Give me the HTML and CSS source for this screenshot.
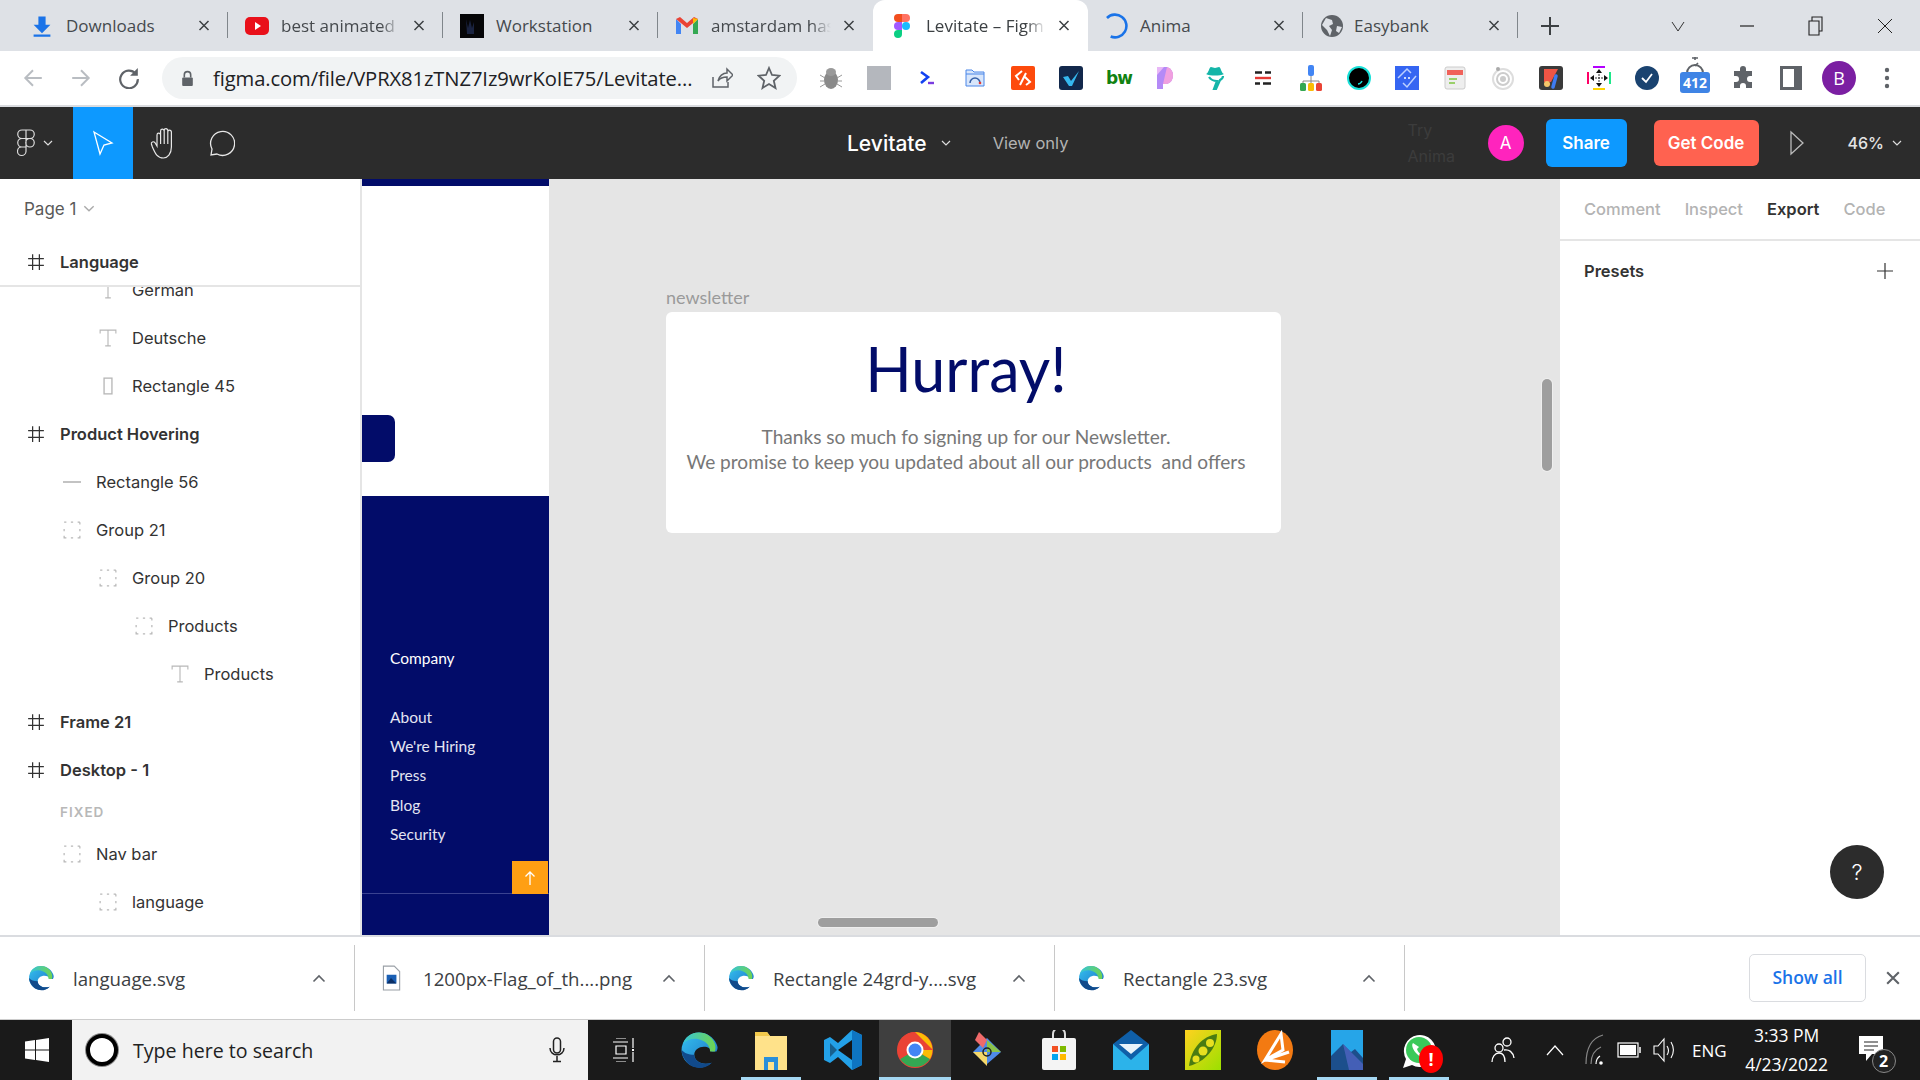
FILE: index.html
```html
<!DOCTYPE html>
<html lang="en">
<head>
  <meta charset="UTF-8" />
  <title>Levitate – Figma</title>
  <link rel="stylesheet" href="styles.css">
</head>
<body>
  <svg class="defs" width="0" height="0">
    <defs>
      <linearGradient id="edgeA" x1="0" y1="0" x2="1" y2="1"><stop offset="0" stop-color="#35c1f1"/><stop offset="1" stop-color="#1b6fc0"/></linearGradient>
      <linearGradient id="edgeB" x1="0" y1="0" x2="1" y2="0"><stop offset="0" stop-color="#36c5d8"/><stop offset="1" stop-color="#6fd44f"/></linearGradient>
      <symbol id="edge" viewBox="0 0 24 24">
        <path d="M12 1a11 11 0 0 0-11 11c0 6 5 11 11 11 3 0 6-1 8-3-6 2-11-1-11-5 0-3 3-5 6-5 3 0 4 1 5 3h3c1-2 1-3 0-5C21 4 17 1 12 1z" fill="url(#edgeA)"/>
        <path d="M12 1C7 1 3 4 2 8c3-3 8-4 12-2 3 1 5 4 5 7h3c2-5-3-12-10-12z" fill="url(#edgeB)"/>
        <path d="M9 15c0 4 5 7 11 5-4 4-9 4-13 2-3-2-6-6-6-10 2 2 4 3 8 3z" fill="#114a8b"/>
      </symbol>
      <symbol id="frameicon" viewBox="0 0 16 16">
        <path d="M5 1v14M11 1v14M1 5h14M1 11h14" fill="none" stroke="#333" stroke-width="1.100"/>
      </symbol>
      <symbol id="groupicon" viewBox="0 0 16 16">
        <path d="M1 1h2M7 1h2M13 1h2M1 7v2M15 7v2M1 13v2h2M7 15h2M13 15h2v-2M1 3v0M15 1v2" fill="none" stroke="#b8b8b8" stroke-width="1.100"/>
      </symbol>
      <symbol id="texticon" viewBox="0 0 16 16">
        <path d="M1 4V1h14v3M8 1v14M5.500 15h5" fill="none" stroke="#b8b8b8" stroke-width="1"/>
      </symbol>
      <symbol id="closex" viewBox="0 0 12 12">
        <path d="M1.500 1.500l9 9M10.500 1.500l-9 9" fill="none" stroke="#3c4043" stroke-width="1.500"/>
      </symbol>
      <symbol id="caret" viewBox="0 0 14 9">
        <path d="M1.500 7.500L7 2l5.500 5.500" fill="none" stroke="#5f6368" stroke-width="1.600"/>
      </symbol>
      <symbol id="chev" viewBox="0 0 10 6">
        <path d="M1 1l4 4 4-4" fill="none" stroke="currentColor" stroke-width="1.200"/>
      </symbol>
    </defs>
  </svg>

  <div class="tabstrip">
    <div class="tab">
      <svg class="tab-icon" viewBox="0 0 20 20"><path d="M7 2h6v7h4l-7 7-7-7h4zM3 17h14v2H3z" fill="#1a73e8"/></svg>
      <span class="tab-title">Downloads</span>
      <svg class="tab-x"><use href="#closex"/></svg>
    </div>
    <div class="tab">
      <svg class="tab-icon" viewBox="0 0 24 24"><rect x="0" y="3" width="24" height="18" rx="5" fill="#e9101a"/><path d="M10 8l6 4-6 4z" fill="#fff"/></svg>
      <span class="tab-title tab-fade">best animated</span>
      <svg class="tab-x"><use href="#closex"/></svg>
    </div>
    <div class="tab">
      <svg class="tab-icon" viewBox="0 0 24 24"><rect width="24" height="24" fill="#060608"/><path d="M6 5l2 9 2-8 2 8 2-6v12H7z" fill="#1a2340"/></svg>
      <span class="tab-title">Workstation</span>
      <svg class="tab-x"><use href="#closex"/></svg>
    </div>
    <div class="tab tab-last-before">
      <svg class="tab-icon" viewBox="0 0 24 24"><path d="M1 5v15h5V10z" fill="#4285f4"/><path d="M23 5v15h-5V10z" fill="#34a853"/><path d="M1 5l4-2 7 6 7-6 4 2-11 9z" fill="#ea4335"/><path d="M18 4l5 1-5 5z" fill="#fbbc04"/></svg>
      <span class="tab-title tab-fade">amstardam has</span>
      <svg class="tab-x"><use href="#closex"/></svg>
    </div>
    <div class="tab tab-active">
      <svg class="tab-icon" viewBox="0 0 16 24"><path d="M4 0h4v8H4a4 4 0 0 1 0-8z" fill="#f24e1e"/><path d="M8 0h4a4 4 0 0 1 0 8H8z" fill="#ff7262"/><path d="M4 8h4v8H4a4 4 0 0 1 0-8z" fill="#a259ff"/><circle cx="12" cy="12" r="4" fill="#1abcfe"/><path d="M4 16h4v4a4 4 0 1 1-4-4z" fill="#0acf83"/></svg>
      <span class="tab-title tab-fade">Levitate – Figm</span>
      <svg class="tab-x"><use href="#closex"/></svg>
    </div>
    <div class="tab">
      <svg class="tab-icon tab-icon-ring" viewBox="0 0 24 24"><path d="M4.600 4.600A10.500 10.500 0 1 1 8 21.700" fill="none" stroke="#1a73e8" stroke-width="2.400"/></svg>
      <span class="tab-title">Anima</span>
      <svg class="tab-x"><use href="#closex"/></svg>
    </div>
    <div class="tab">
      <svg class="tab-icon" viewBox="0 0 24 24"><circle cx="12" cy="12" r="11" fill="#5f6368"/><path d="M6 4l6 2 1 4-4 2 3 4-2 6-3-6-5-5zM17 12l5 1-3 6-3-2z" fill="#dee1e6"/></svg>
      <span class="tab-title tab-title-tight">Easybank</span>
      <svg class="tab-x"><use href="#closex"/></svg>
    </div>
    <div class="newtab">
      <svg width="18" height="18" viewBox="0 0 18 18"><path d="M9 0v18M0 9h18" stroke="#3c4043" stroke-width="2"/></svg>
    </div>
    <div class="winctl">
      <svg class="winbtn" viewBox="0 0 16 16" width="16" height="16"><path d="M2 4l6 9 6-9" fill="none" stroke="#333" stroke-width="1"/></svg>
      <svg class="winbtn" viewBox="0 0 16 16" width="16" height="16"><path d="M1 8h14" stroke="#222" stroke-width="1.200"/></svg>
      <svg class="winbtn" viewBox="0 0 16 20" width="16" height="20"><path d="M1 5h10v14H1zM4 5V1h10v14h-3" fill="none" stroke="#222" stroke-width="1.100"/></svg>
      <svg class="winbtn" viewBox="0 0 16 16" width="16" height="16"><path d="M1 1l14 14M15 1L1 15" stroke="#222" stroke-width="1"/></svg>
    </div>
  </div>

  <div class="toolbar">
    <svg class="nav-btn" viewBox="0 0 20 20"><path d="M18 10H3M10 3l-7 7 7 7" fill="none" stroke="#b9bdc2" stroke-width="1.800"/></svg>
    <svg class="nav-btn" viewBox="0 0 20 20"><path d="M2 10h15M10 3l7 7-7 7" fill="none" stroke="#b9bdc2" stroke-width="1.800"/></svg>
    <svg class="nav-btn" viewBox="0 0 20 20"><path d="M16 6a8 8 0 1 0 2 5" fill="none" stroke="#5f6368" stroke-width="2"/><path d="M18 1v7h-7z" fill="#5f6368"/></svg>
    <div class="omnibox">
      <svg class="lock" viewBox="0 0 12 16"><path d="M3 7V4.500a3 3 0 0 1 6 0V7" fill="none" stroke="#5f6368" stroke-width="1.500"/><rect x="1" y="7" width="10" height="8" rx="1" fill="#5f6368"/></svg>
      <span class="url">figma.com/file/VPRX81zTNZ7Iz9wrKoIE75/Levitate...</span>
      <svg class="omni-icon" viewBox="0 0 24 24"><path d="M4 11v10h15v-5M9 15c1-5 5-8 9-8V3l6 6-6 6v-4c-4 0-7 1-9 4z" fill="none" stroke="#5f6368" stroke-width="1.500"/></svg>
      <svg class="omni-icon" viewBox="0 0 24 24"><path d="M12 2l3 7 7.500.7-5.700 5 1.700 7.300L12 18l-6.500 4 1.700-7.300-5.700-5L9 9z" fill="none" stroke="#5f6368" stroke-width="1.800"/></svg>
    </div>
    <div class="extensions">
      <div class="ext"><svg width="24" height="24" viewBox="0 0 24 24"><ellipse cx="12" cy="14" rx="7" ry="9" fill="#8a8a8a"/><ellipse cx="12" cy="6" rx="5" ry="4" fill="#9a9a9a"/><path d="M1 9l5 3M1 15h5M1 21l5-3M23 9l-5 3M23 15h-5M23 21l-5-3" stroke="#999" stroke-width="1"/></svg></div>
      <div class="ext"><span class="ext-gray"></span></div>
      <div class="ext"><svg width="16" height="16" viewBox="0 0 16 16"><path d="M2 2l7 5-7 6" fill="none" stroke="#1342f0" stroke-width="2.600"/><path d="M9 13h6" stroke="#7a3ce0" stroke-width="2.400"/></svg></div>
      <div class="ext"><svg width="20" height="18" viewBox="0 0 20 18"><path d="M1 1h6l2 2h10v14H1z" fill="#d8e6fb" stroke="#4a86e8"/><path d="M1 5h18" stroke="#4a86e8"/><path d="M5 14a5 5 0 0 1 10 0" fill="none" stroke="#3560a8" stroke-width="1.500"/><circle cx="15" cy="14" r="1.300" fill="#e53935"/></svg></div>
      <div class="ext"><svg width="24" height="24" viewBox="0 0 24 24"><rect width="24" height="24" rx="2" fill="#fd4a0c"/><path d="M11 5l-6 5 3 4M15 7l-6 12M14 11l5 5-4 3" fill="none" stroke="#fff" stroke-width="2"/></svg></div>
      <div class="ext"><svg width="24" height="24" viewBox="0 0 24 24"><rect width="24" height="24" rx="3" fill="#12284b"/><path d="M4 11l5-1 3 5 8-10-7 15h-3z" fill="#35b7ee"/></svg></div>
      <div class="ext"><span class="ext-bw">bw</span></div>
      <div class="ext"><svg width="22" height="24" viewBox="0 0 22 24"><path d="M1 1h10a9 9 0 0 1 0 17H7v5H1z" fill="#b48af7"/><path d="M1 1h7L1 9z" fill="#e8b7f7"/><path d="M11 1a9 9 0 0 1 0 17H7z" fill="#f0a0e0"/></svg></div>
      <div class="ext"><svg width="20" height="24" viewBox="0 0 20 24"><path d="M1 8c4 2 14 2 18 0-3-1-3-7-5-7l-4 1-4-1C4 1 4 7 1 8z" fill="#14b5a8"/><path d="M4 11c2 3 5 4 8 4l-3 8h2l4-9c2-1 3-2 3-4" fill="none" stroke="#14b5a8" stroke-width="2.200"/></svg></div>
      <div class="ext"><svg width="16" height="14" viewBox="0 0 16 14"><path d="M0 1.500h7M10 1.500h6M0 12.500h5M8 12.500h8" stroke="#222" stroke-width="2.400"/><path d="M0 7h16" stroke="#e53935" stroke-width="2.400"/></svg></div>
      <div class="ext"><svg width="24" height="26" viewBox="0 0 24 26"><rect x="9" y="0" width="6" height="11" rx="2" fill="#4285f4"/><path d="M12 11v5M4 16h16M4 16v2M12 16v2M20 16v2" stroke="#888" fill="none"/><rect x="1" y="18" width="6" height="8" rx="1.500" fill="#34a853"/><rect x="9" y="18" width="6" height="8" rx="1.500" fill="#fbbc04"/><rect x="17" y="18" width="6" height="8" rx="1.500" fill="#ea4335"/></svg></div>
      <div class="ext"><svg width="24" height="24" viewBox="0 0 24 24"><circle cx="12" cy="12" r="11" fill="#000" stroke="#19e0d8" stroke-width="2"/><path d="M15 15c-1 2-2 3-4 3" fill="none" stroke="#19e0d8" stroke-width="1.500"/></svg></div>
      <div class="ext"><svg width="24" height="24" viewBox="0 0 24 24"><rect width="24" height="24" fill="#3565f2"/><path d="M3 12l9-9 4 4M21 10l-9 11-4-4" fill="none" stroke="#bcd0ff" stroke-width="1.500"/><circle cx="10" cy="12" r="1" fill="#fff"/><circle cx="14" cy="12" r="1" fill="#fff"/></svg></div>
      <div class="ext"><svg width="22" height="24" viewBox="0 0 22 24"><rect x="1" y="1" width="20" height="22" rx="2" fill="#eee" stroke="#ccc"/><rect x="3" y="4" width="16" height="5" fill="#f0625a"/><path d="M5 13h8M5 17h6" stroke="#9ad06a" stroke-width="2"/></svg></div>
      <div class="ext"><svg width="24" height="24" viewBox="0 0 24 24"><circle cx="12" cy="13" r="10" fill="none" stroke="#ddd" stroke-width="2"/><circle cx="12" cy="13" r="6" fill="none" stroke="#ccc" stroke-width="2"/><circle cx="12" cy="13" r="3" fill="#ccc"/><circle cx="7" cy="3" r="2" fill="#aaa"/></svg></div>
      <div class="ext"><svg width="24" height="24" viewBox="0 0 24 24"><rect width="24" height="24" rx="3" fill="#3a3a3a"/><path d="M5 3h14l-7 13H5z" fill="#f05545"/><circle cx="8" cy="18" r="3" fill="#f5c66a"/><path d="M17 10l-3 11" stroke="#3f7bf0" stroke-width="3.500" stroke-linecap="round"/></svg></div>
      <div class="ext"><svg width="24" height="24" viewBox="0 0 24 24"><path d="M6 1h12" stroke="#b400ff" stroke-width="2"/><path d="M6 23h12" stroke="#ffd400" stroke-width="2"/><path d="M1 6v12" stroke="#ff0066" stroke-width="2"/><path d="M23 6v12" stroke="#1ee88a" stroke-width="2"/><path d="M12 5v14M5 12h14" stroke="#333" stroke-dasharray="2 1"/><path d="M12 3l3 4H9zM12 21l3-4H9zM3 12l4-3v6zM21 12l-4-3v6z" fill="#111"/></svg></div>
      <div class="ext"><svg width="24" height="24" viewBox="0 0 24 24"><circle cx="12" cy="12" r="12" fill="#1a4370"/><path d="M7 12l4 4 6-8" fill="none" stroke="#fff" stroke-width="1.800"/></svg></div>
      <div class="ext ext-timer">
        <svg width="22" height="18" viewBox="0 0 22 18"><path d="M3 16a8 8 0 0 1 16 0" fill="none" stroke="#5f6368" stroke-width="2"/><path d="M11 0v3M8 1h6M11 9l3-3" stroke="#5f6368" stroke-width="1.600"/></svg>
        <span class="badge">412</span>
      </div>
      <div class="ext"><svg width="24" height="24" viewBox="0 0 24 24"><path d="M9 3a3 3 0 0 1 6 0v2h6v5h-2a3 3 0 0 0 0 6h2v6h-6v-2a3 3 0 0 0-6 0v2H3v-6h2a3 3 0 0 0 0-6H3V5h6z" fill="#5f6368"/></svg></div>
      <div class="ext"><svg width="22" height="24" viewBox="0 0 22 24"><rect x="1.500" y="1.500" width="19" height="21" fill="none" stroke="#5f6368" stroke-width="3"/><rect x="14" y="1.500" width="6" height="21" fill="#5f6368"/></svg></div>
      <div class="ext"><span class="profile">B</span></div>
      <div class="ext"><svg width="6" height="22" viewBox="0 0 6 22"><circle cx="3" cy="3" r="2.200" fill="#5f6368"/><circle cx="3" cy="11" r="2.200" fill="#5f6368"/><circle cx="3" cy="19" r="2.200" fill="#5f6368"/></svg></div>
    </div>
  </div>

  <div class="figbar">
    <div class="fig-left">
      <div class="fig-logo">
        <svg width="18" height="28" viewBox="0 0 18 28"><path d="M5 1h4v8.500H5A4.250 4.250 0 0 1 5 1zM9 1h4a4.250 4.250 0 0 1 0 8.500H9zM5 9.500h4V18H5a4.250 4.250 0 0 1 0-8.500zM13 9.500a4.250 4.250 0 1 1 0 8.500 4.250 4.250 0 0 1 0-8.500zM5 18h4v4.500A4.250 4.250 0 1 1 5 18z" fill="none" stroke="#ddd" stroke-width="1.200"/></svg>
        <svg class="fig-chev"><use href="#chev"/></svg>
      </div>
      <div class="fig-tool fig-tool-on">
        <svg width="22" height="26" viewBox="0 0 22 26"><path d="M2 2l18 11-8 2-4 9z" fill="none" stroke="#fff" stroke-width="1.300"/></svg>
      </div>
      <div class="fig-tool fig-tool-hand">
        <svg width="28" height="32" viewBox="0 0 28 32"><path d="M7 19V8a1.800 1.800 0 0 1 3.600 0V4a1.800 1.800 0 0 1 3.600 0v-.5a1.800 1.800 0 0 1 3.600 0V5a1.800 1.800 0 0 1 3.600 0v15c0 7-4 11-8 11-6 0-8-4-11-11l-1-3c-.5-2 2-3 3.500-1.500z M10.600 8v9M14.200 4v13M17.800 4v13" fill="none" stroke="#e8e8e8" stroke-width="1.200"/></svg>
      </div>
      <div class="fig-tool fig-tool-comment">
        <svg width="28" height="28" viewBox="0 0 28 28"><path d="M4 26l1-6a12 12 0 1 1 5 5z" fill="none" stroke="#e8e8e8" stroke-width="1.300"/></svg>
      </div>
    </div>
    <div class="fig-mid">
      <span class="fig-name">Levitate</span>
      <svg class="fig-chev"><use href="#chev"/></svg>
      <span class="fig-view">View only</span>
    </div>
    <div class="fig-right">
      <span class="try-anima">Try<br>Anima</span>
      <span class="fig-avatar">A</span>
      <span class="fig-share">Share</span>
      <span class="fig-code">Get Code</span>
      <svg class="fig-play" width="16" height="26" viewBox="0 0 16 26"><path d="M2 2l12 11L2 24z" fill="none" stroke="#bbb" stroke-width="1.300"/></svg>
      <span class="fig-zoom">46%</span>
      <svg class="fig-chev"><use href="#chev"/></svg>
    </div>
  </div>

  <div class="workspace">
    <aside class="layers">
      <div class="page-row">Page 1 <svg class="page-chev"><use href="#chev"/></svg></div>
      <div class="layer layer-frame layer-sticky">
        <svg class="layer-icon"><use href="#frameicon"/></svg><span>Language</span>
      </div>
      <div class="layer-list">
        <div class="layer lvl2"><svg class="layer-icon"><use href="#texticon"/></svg><span>German</span></div>
        <div class="layer lvl2"><svg class="layer-icon"><use href="#texticon"/></svg><span>Deutsche</span></div>
        <div class="layer lvl2"><svg class="layer-icon" viewBox="0 0 16 16"><rect x="4.500" y="1" width="7" height="14" fill="none" stroke="#b8b8b8" stroke-width="1.200"/></svg><span>Rectangle 45</span></div>
        <div class="layer layer-frame"><svg class="layer-icon"><use href="#frameicon"/></svg><span>Product Hovering</span></div>
        <div class="layer lvl1"><svg class="layer-icon" viewBox="0 0 16 16"><path d="M0 8h16" stroke="#b8b8b8" stroke-width="1.500"/></svg><span>Rectangle 56</span></div>
        <div class="layer lvl1"><svg class="layer-icon"><use href="#groupicon"/></svg><span>Group 21</span></div>
        <div class="layer lvl2"><svg class="layer-icon"><use href="#groupicon"/></svg><span>Group 20</span></div>
        <div class="layer lvl3"><svg class="layer-icon"><use href="#groupicon"/></svg><span>Products</span></div>
        <div class="layer lvl4"><svg class="layer-icon"><use href="#texticon"/></svg><span>Products</span></div>
        <div class="layer layer-frame"><svg class="layer-icon"><use href="#frameicon"/></svg><span>Frame 21</span></div>
        <div class="layer layer-frame"><svg class="layer-icon"><use href="#frameicon"/></svg><span>Desktop - 1</span></div>
        <div class="fixed-label">FIXED</div>
        <div class="layer lvl1"><svg class="layer-icon"><use href="#groupicon"/></svg><span>Nav bar</span></div>
        <div class="layer lvl2"><svg class="layer-icon"><use href="#groupicon"/></svg><span>language</span></div>
      </div>
    </aside>

    <main class="canvas">
      <section class="site-frame">
        <div class="site-topbar"></div>
        <div class="site-white"><span class="site-btn"></span></div>
        <div class="site-footer">
          <div class="foot-head">Company</div>
          <div class="foot-link">About</div>
          <div class="foot-link">We're Hiring</div>
          <div class="foot-link">Press</div>
          <div class="foot-link">Blog</div>
          <div class="foot-link">Security</div>
          <div class="foot-rule">
            <span class="to-top"><svg width="12" height="14" viewBox="0 0 12 14"><path d="M6 14V1M1.500 5.500L6 1l4.500 4.500" fill="none" stroke="#fff" stroke-width="1.300"/></svg></span>
          </div>
        </div>
      </section>

      <span class="frame-label">newsletter</span>
      <section class="news-frame">
        <h1 class="news-title">Hurray!</h1>
        <p class="news-text">Thanks so much fo signing up for our Newsletter.<br>We promise to keep you updated about all our products&nbsp; and offers</p>
      </section>

      <span class="scroll-v"></span>
      <span class="scroll-h"></span>
    </main>

    <aside class="props">
      <div class="props-tabs">
        <span>Comment</span><span>Inspect</span><span class="props-on">Export</span><span>Code</span>
      </div>
      <div class="presets">
        <span>Presets</span>
        <svg width="16" height="16" viewBox="0 0 16 16"><path d="M8 0v16M0 8h16" stroke="#333" stroke-width="1.200"/></svg>
      </div>
      <span class="help">?</span>
    </aside>
  </div>

  <div class="downloads">
    <div class="dl-item">
      <svg class="dl-icon"><use href="#edge"/></svg>
      <span class="dl-name">language.svg</span>
      <svg class="dl-caret"><use href="#caret"/></svg>
    </div>
    <div class="dl-item">
      <svg class="dl-icon" viewBox="0 0 24 24"><path d="M5 1h10l5 5v17H5z" fill="#fff" stroke="#9aa0a6"/><rect x="8" y="9" width="9" height="8" fill="#1a5fb4"/><path d="M8 17l4-5 5 5z" fill="#0b2f66"/></svg>
      <span class="dl-name">1200px-Flag_of_th....png</span>
      <svg class="dl-caret"><use href="#caret"/></svg>
    </div>
    <div class="dl-item">
      <svg class="dl-icon"><use href="#edge"/></svg>
      <span class="dl-name">Rectangle 24grd-y....svg</span>
      <svg class="dl-caret"><use href="#caret"/></svg>
    </div>
    <div class="dl-item">
      <svg class="dl-icon"><use href="#edge"/></svg>
      <span class="dl-name">Rectangle 23.svg</span>
      <svg class="dl-caret"><use href="#caret"/></svg>
    </div>
    <span class="show-all">Show all</span>
    <svg class="dl-close" viewBox="0 0 12 12"><path d="M1 1l10 10M11 1L1 11" stroke="#5f6368" stroke-width="1.800"/></svg>
  </div>

  <footer class="taskbar">
    <div class="start">
      <svg width="24" height="24" viewBox="0 0 24 24"><path d="M0 3.500l10-1.400V11.500H0zM11 2l13-2v11.500H11zM0 12.500h10V22L0 20.500zM11 12.500h13V24l-13-2z" fill="#fff"/></svg>
    </div>
    <div class="search">
      <span class="cortana"></span>
      <span class="search-text">Type here to search</span>
      <svg class="search-mic" width="16" height="26" viewBox="0 0 16 26"><rect x="4.500" y="1" width="7" height="15" rx="3.500" fill="none" stroke="#222" stroke-width="1.500"/><path d="M1 11c0 9 14 9 14 0M8 19v5M4 24.500h8" fill="none" stroke="#222" stroke-width="1.500"/></svg>
    </div>
    <div class="task-apps">
      <div class="app app-view">
        <svg width="24" height="24" viewBox="0 0 24 24"><path d="M0 4h15M0 20h15M3 0h10M3 24h10M3 8h10v8H3zM20 0v10M20 14v10" fill="none" stroke="#fff" stroke-width="1.200"/><path d="M19 11h2v2h-2z" fill="#fff"/></svg>
      </div>
      <div class="app"><svg width="38" height="40"><use href="#edge"/></svg></div>
      <div class="app app-run-split">
        <svg width="32" height="40" viewBox="0 0 32 40"><path d="M0 2h12l3 4h17v34H0z" fill="#ffe28a"/><path d="M0 2h12l3 4H0z" fill="#f2c94c"/><path d="M9 40V27h14v13h-4v-8h-6v8z" fill="#2a8fd9"/></svg>
      </div>
      <div class="app">
        <svg width="38" height="40" viewBox="0 0 38 40"><path d="M28 0l10 5v30l-10 5-14-13-8 6-6-3V10l6-3 8 6z" fill="#23a1e8"/><path d="M28 0v40l10-5V5z" fill="#0e75c2"/><path d="M6 13v14l7-7z" fill="#0b1f33" opacity=".5"/><path d="M14 20l14-10v20z" fill="#161616"/></svg>
      </div>
      <div class="app app-active">
        <svg width="36" height="36" viewBox="0 0 36 36"><circle cx="18" cy="18" r="18" fill="#ea4335"/><path d="M18 18L33 27a18 18 0 0 1-30 0z" fill="#34a853"/><path d="M18 0a18 18 0 0 1 15 27L18 18h18z" fill="#fbbc04"/><path d="M18 0a18 18 0 0 0-15 27L18 18V0z" fill="#ea4335"/><circle cx="18" cy="18" r="8.500" fill="#fff"/><circle cx="18" cy="18" r="6.500" fill="#4285f4"/></svg>
      </div>
      <div class="app">
        <svg width="36" height="40" viewBox="0 0 36 40"><path d="M18 8L32 22 18 34 4 22z" fill="#4f8ae8"/><path d="M18 10l14 12-14 0z" fill="#8bc34a"/><path d="M4 22h14v14z" fill="#f5d86a"/><path d="M10 2l8 8-4 8-8-8z" fill="#f06a6a"/><circle cx="18" cy="22" r="4" fill="none" stroke="#222" stroke-width="1.500"/></svg>
      </div>
      <div class="app">
        <svg width="34" height="40" viewBox="0 0 34 40"><path d="M11 8V4a6 6 0 0 1 12 0v4" fill="none" stroke="#ddd" stroke-width="2"/><rect y="8" width="34" height="32" rx="2" fill="#f4f4f4"/><rect x="10" y="16" width="6" height="6" fill="#f25022"/><rect x="18" y="16" width="6" height="6" fill="#7fba00"/><rect x="10" y="24" width="6" height="6" fill="#00a4ef"/><rect x="18" y="24" width="6" height="6" fill="#ffb900"/></svg>
      </div>
      <div class="app">
        <svg width="36" height="40" viewBox="0 0 36 40"><path d="M18 0L0 14v26h36V14z" fill="#0f5fa8"/><path d="M0 14l18 16 18-16v26H0z" fill="#2cb3ea"/><path d="M6 14h24l-12 10z" fill="#e8f4fb"/></svg>
      </div>
      <div class="app">
        <svg width="36" height="40" viewBox="0 0 36 40"><defs><linearGradient id="pea" x1="0" y1="0" x2="1" y2="1"><stop offset="0" stop-color="#ffd21f"/><stop offset="1" stop-color="#9be000"/></linearGradient></defs><rect width="36" height="40" fill="url(#pea)"/><path d="M4 36C6 18 18 6 32 4c0 14-12 28-28 32z" fill="#4a7c12"/><circle cx="25" cy="13" r="4" fill="#e8e020"/><circle cx="18" cy="21" r="4.500" fill="#e8e020"/><circle cx="11" cy="29" r="3.500" fill="#e8e020"/></svg>
      </div>
      <div class="app">
        <svg width="36" height="40" viewBox="0 0 36 40"><ellipse cx="18" cy="20" rx="18" ry="20" fill="#f37a12"/><path d="M8 30L24 4l2 16zM8 30l24-8-12 4zM8 30l20 2" fill="none" stroke="#fff" stroke-width="3"/></svg>
      </div>
      <div class="app app-run">
        <svg width="32" height="40" viewBox="0 0 32 40"><rect width="32" height="40" fill="#26a5e8"/><path d="M0 40V26l12-12 8 8 4-3 8 9v12z" fill="#1c4f8c"/><path d="M12 14l20 20v6H18z" fill="#5566c8" opacity=".7"/></svg>
      </div>
      <div class="app app-run">
        <span class="wa">
          <svg width="36" height="40" viewBox="0 0 36 40"><path d="M2 38l3-9a16 16 0 1 1 6 6z" fill="#fff"/><circle cx="18" cy="20" r="13" fill="#3bc95a"/><path d="M12 13c-2 2 0 7 4 11s8 5 10 3l-3-4-3 1c-2-1-3-2-4-5l2-2z" fill="#fff"/></svg>
          <span class="wa-badge">!</span>
        </span>
      </div>
    </div>
    <div class="tray">
      <svg class="tray-people" width="24" height="26" viewBox="0 0 24 26"><circle cx="8" cy="11" r="4" fill="none" stroke="#fff" stroke-width="1.300"/><circle cx="16" cy="5" r="4" fill="none" stroke="#fff" stroke-width="1.300"/><path d="M1 25c0-5 3-9 7-9s6 4 6 9M13 13c5-1 9 2 10 8" fill="none" stroke="#fff" stroke-width="1.300"/></svg>
      <svg class="tray-up" width="18" height="12" viewBox="0 0 18 12"><path d="M1 11l8-9 8 9" fill="none" stroke="#fff" stroke-width="1.200"/></svg>
      <svg class="tray-wifi" width="20" height="32" viewBox="0 0 20 32"><path d="M1 30C1 14 7 4 18 1M6 30c0-9 3-14 10-17" fill="none" stroke="#888" stroke-width="1.200"/><path d="M11 30c0-4 1-6 4-8" fill="none" stroke="#fff" stroke-width="1.200"/><circle cx="16" cy="29" r="1.800" fill="#fff"/></svg>
      <svg class="tray-batt" width="24" height="16" viewBox="0 0 24 16"><rect x="1" y="1" width="20" height="14" fill="none" stroke="#fff" stroke-width="1.200"/><rect x="3" y="3" width="16" height="10" fill="#fff"/><path d="M23 5v6" stroke="#fff" stroke-width="1.500"/></svg>
      <svg class="tray-vol" width="22" height="26" viewBox="0 0 22 26"><path d="M1 9h4l6-7v22l-6-7H1z" fill="none" stroke="#fff" stroke-width="1.100"/><path d="M14 9c2 3 2 6 0 9M18 5c3 5 3 11 0 16" fill="none" stroke="#fff" stroke-width="1.100"/></svg>
      <span class="tray-lang">ENG</span>
      <div class="clock"><span>3:33 PM</span><span>4/23/2022</span></div>
      <div class="notif">
        <svg width="26" height="30" viewBox="0 0 26 30"><path d="M1 1h24v18H14l-6 7v-7H1z" fill="#fff"/><path d="M6 7h14M6 11h14M6 15h10" stroke="#222" stroke-width="1.200"/></svg>
        <span class="notif-count">2</span>
      </div>
    </div>
  </footer>
</body>
</html>
```

FILE: styles.css
```css
* {
  box-sizing: border-box;
}
html, body {
  margin: 0;
  padding: 0;
}
body {
  width: 1920px;
  height: 1080px;
  overflow: hidden;
  display: flex;
  flex-direction: column;
  font-family: "Open Sans", "Noto Sans", sans-serif;
  background: #fff;
}
.defs {
  position: absolute;
}

/* chrome tabs */
.tabstrip {
  height: 51px;
  flex: none;
  display: flex;
  align-items: stretch;
  padding-left: 13px;
  background: #dee1e6;
}
.tab {
  width: 215px;
  flex: none;
  display: flex;
  align-items: center;
  padding: 0 18px 0 20px;
  position: relative;
  color: #45494d;
}
.tab::after {
  content: "";
  position: absolute;
  right: 0;
  top: 12px;
  height: 26px;
  width: 1px;
  background: #80868b;
}
.tab-last-before::after,
.tab-active::after {
  display: none;
}
.tab-active {
  background: #fff;
  border-radius: 12px 12px 0 0;
  color: #3c4043;
}
.tab-icon {
  width: 24px;
  height: 24px;
  flex: none;
  margin-left: -3px;
}
.tab-icon-ring {
  width: 26px;
  height: 26px;
  margin-left: -6px;
  margin-right: 0;
}
.tab-title {
  flex: 1;
  min-width: 0;
  margin-left: 12px;
  font-size: 17px;
  white-space: nowrap;
}
.tab-title-tight {
  margin-left: 10px;
}
.tab-fade {
  -webkit-mask-image: linear-gradient(to left, transparent 4px, #000 24px);
  mask-image: linear-gradient(to left, transparent 4px, #000 24px);
}
.tab-x {
  width: 12px;
  height: 13px;
  flex: none;
  margin-left: 8px;
}
.newtab {
  width: 64px;
  display: flex;
  align-items: center;
  justify-content: center;
}
.winctl {
  margin-left: auto;
  display: flex;
  align-items: center;
  padding-right: 27px;
  gap: 53px;
}

/* chrome toolbar */
.toolbar {
  height: 56px;
  flex: none;
  display: flex;
  align-items: center;
  padding: 0 0 0 22px;
  background: #fff;
  border-bottom: 2px solid #dadce0;
}
.nav-btn {
  width: 22px;
  height: 22px;
  flex: none;
  margin-right: 26px;
}
.nav-btn:nth-child(3) {
  margin-right: 22px;
}
.omnibox {
  width: 635px;
  height: 42px;
  flex: none;
  display: flex;
  align-items: center;
  padding: 0 16px 0 19px;
  border-radius: 21px;
  background: #f1f3f4;
}
.lock {
  width: 13px;
  height: 17px;
  flex: none;
}
.url {
  flex: 1;
  min-width: 0;
  margin-left: 19px;
  font-size: 20.200px;
  letter-spacing: -0.1px;
  color: #202124;
  white-space: nowrap;
}
.omni-icon {
  width: 24px;
  height: 24px;
  flex: none;
  margin-left: 24px;
}
.extensions {
  display: flex;
  margin-left: 10px;
}
.ext {
  width: 48px;
  height: 46px;
  display: flex;
  align-items: center;
  justify-content: center;
  position: relative;
}
.ext-gray {
  width: 24px;
  height: 24px;
  background: #b4b7bd;
}
.ext-bw {
  font-family: "DejaVu Sans", sans-serif;
  font-size: 17px;
  font-weight: 700;
  color: #118211;
  letter-spacing: -1px;
}
.ext-timer {
  flex-direction: column;
  justify-content: flex-start;
  padding-top: 2px;
}
.badge {
  width: 30px;
  height: 21px;
  margin-top: -3px;
  border-radius: 3px;
  background: #3f84e5;
  color: #fff;
  font-size: 14px;
  font-weight: 700;
  text-align: center;
  line-height: 21px;
}
.profile {
  width: 34px;
  height: 34px;
  border-radius: 50%;
  background: #7b1fa2;
  color: #fff;
  font-size: 18px;
  text-align: center;
  line-height: 34px;
}

/* figma bar */
.figbar {
  height: 72px;
  flex: none;
  display: flex;
  align-items: center;
  background: #2c2c2c;
  color: #fff;
  font-family: Inter, sans-serif;
  position: relative;
}
.fig-left {
  display: flex;
  height: 100%;
  width: 834px;
  flex: none;
}
.fig-logo {
  width: 73px;
  display: flex;
  align-items: center;
  padding-left: 17px;
  gap: 8px;
}
.fig-chev {
  width: 10px;
  height: 6px;
  color: #ddd;
  flex: none;
}
.fig-tool {
  width: 60px;
  display: flex;
  align-items: center;
  justify-content: center;
}
.fig-tool-on {
  background: #0d99ff;
}
.fig-tool-hand {
  padding-left: 2px;
}
.fig-tool-comment {
  padding-right: 5px;
}
.fig-mid {
  display: flex;
  align-items: center;
  padding-left: 13px;
}
.fig-name {
  font-size: 21px;
  font-weight: 500;
  margin-right: 14px;
}
.fig-view {
  margin-left: 42px;
  font-size: 16.500px;
  color: #b3b3b3;
}
.fig-right {
  margin-left: auto;
  display: flex;
  align-items: center;
  padding-right: 18px;
}
.try-anima {
  width: 80px;
  font-size: 16px;
  line-height: 26px;
  color: #3c3c3c;
}
.fig-avatar {
  width: 36px;
  height: 36px;
  border-radius: 50%;
  background: #ff24bd;
  text-align: center;
  font-size: 17px;
  line-height: 36px;
}
.fig-share {
  width: 81px;
  height: 48px;
  margin-left: 22px;
  border-radius: 6px;
  background: #0d99ff;
  font-size: 17px;
  font-weight: 600;
  text-align: center;
  line-height: 48px;
}
.fig-code {
  width: 105px;
  height: 46px;
  margin-left: 27px;
  border-radius: 6px;
  background: #ff6250;
  font-size: 17px;
  font-weight: 600;
  text-align: center;
  line-height: 46px;
}
.fig-play {
  margin: 0 43px 0 30px;
}
.fig-zoom {
  font-size: 16px;
  font-weight: 500;
  color: #e4e4e4;
  margin-right: 8px;
}

/* workspace */
.workspace {
  flex: 1;
  min-height: 0;
  display: flex;
  font-family: Inter, sans-serif;
}
.layers {
  width: 362px;
  flex: none;
  display: flex;
  flex-direction: column;
  background: #fff;
  border-right: 2px solid #e5e5e5;
  overflow: hidden;
}
.page-row {
  height: 59px;
  flex: none;
  display: flex;
  align-items: center;
  gap: 7px;
  padding-left: 24px;
  font-size: 17px;
  color: #5a5a5a;
}
.page-chev {
  width: 12px;
  height: 7px;
  color: #aaa;
}
.layer {
  height: 48px;
  flex: none;
  display: flex;
  align-items: center;
  padding-left: 27px;
  font-size: 16.500px;
  color: #333;
}
.layer-icon {
  width: 18px;
  height: 18px;
  flex: none;
  margin-right: 15px;
}
.layer-frame {
  font-weight: 600;
  color: #333;
}
.layer-sticky {
  border-bottom: 2px solid #e5e5e5;
  background: #fff;
  position: relative;
  z-index: 1;
  height: 49px;
}
.lvl1 { padding-left: 63px; }
.lvl2 { padding-left: 99px; }
.lvl3 { padding-left: 135px; }
.lvl4 { padding-left: 171px; }
.layer-list {
  flex: 1;
  min-height: 0;
  overflow: hidden;
  margin-top: -21px;
}
.fixed-label {
  height: 36px;
  display: flex;
  align-items: center;
  padding-left: 60px;
  font-size: 13.500px;
  font-weight: 600;
  letter-spacing: 1px;
  color: #b8b8b8;
}

.canvas {
  flex: 1;
  min-width: 0;
  position: relative;
  overflow: hidden;
  background: #e5e5e5;
}
.site-frame {
  position: absolute;
  left: 0;
  top: 0;
  bottom: 0;
  width: 187px;
  display: flex;
  flex-direction: column;
  font-family: Lato, sans-serif;
}
.site-topbar {
  height: 7px;
  background: #020c69;
}
.site-white {
  height: 310px;
  padding-top: 229px;
  background: #fff;
}
.site-btn {
  display: block;
  width: 33px;
  height: 47px;
  border-radius: 0 7px 7px 0;
  background: #020c69;
}
.site-footer {
  flex: 1;
  background: #020c69;
  color: #fff;
  padding: 150px 0 0 28px;
  position: relative;
}
.foot-head {
  font-size: 15.500px;
  margin-bottom: 32.500px;
  line-height: 24px;
}
.foot-link {
  font-size: 15.500px;
  line-height: 29.400px;
  color: #e4e5f2;
}
.foot-rule {
  position: absolute;
  left: 0;
  right: 0;
  top: 397px;
  border-top: 1px solid #3a4290;
}
.to-top {
  position: absolute;
  right: 1px;
  bottom: 0;
  width: 36px;
  height: 33px;
  display: flex;
  align-items: center;
  justify-content: center;
  background: #ff9f13;
}
.frame-label {
  position: absolute;
  left: 304px;
  top: 107px;
  font-family: Lato, sans-serif;
  font-size: 18px;
  color: #9a9a9a;
}
.news-frame {
  position: absolute;
  left: 304px;
  top: 133px;
  width: 615px;
  height: 221px;
  border-radius: 6px;
  background: #fff;
  font-family: Lato, sans-serif;
  text-align: center;
  padding-right: 15px;
}
.news-title {
  margin: 15px 0 0;
  font-size: 61px;
  font-weight: 400;
  line-height: 84px;
  color: #020c69;
}
.news-text {
  margin: 14px 0 0;
  font-size: 19.100px;
  line-height: 24.500px;
  color: #777;
}
.scroll-v {
  position: absolute;
  right: 8px;
  top: 200px;
  width: 10px;
  height: 92px;
  border-radius: 5px;
  background: #9e9e9e;
  box-shadow: 0 0 0 1px #eee;
}
.scroll-h {
  position: absolute;
  left: 456px;
  bottom: 8px;
  width: 120px;
  height: 9px;
  border-radius: 5px;
  background: #9e9e9e;
  box-shadow: 0 0 0 1px #eee;
}
.props {
  width: 360px;
  flex: none;
  background: #fff;
  position: relative;
}
.props-tabs {
  height: 62px;
  display: flex;
  align-items: center;
  gap: 24px;
  padding-left: 24px;
  border-bottom: 2px solid #e5e5e5;
  font-size: 16.500px;
  font-weight: 500;
  color: #b3b3b3;
}
.props-on {
  color: #333;
  font-weight: 600;
}
.presets {
  height: 60px;
  display: flex;
  align-items: center;
  justify-content: space-between;
  padding: 0 27px 0 24px;
  font-size: 16.500px;
  font-weight: 600;
  color: #333;
}
.help {
  position: absolute;
  right: 36px;
  bottom: 36px;
  width: 54px;
  height: 54px;
  border-radius: 50%;
  background: #2c2c2c;
  color: #fff;
  font-size: 22px;
  font-weight: 300;
  text-align: center;
  line-height: 54px;
}

/* download shelf */
.downloads {
  height: 85px;
  flex: none;
  display: flex;
  align-items: center;
  padding-left: 5px;
  border-top: 2px solid #dadce0;
  border-bottom: 1px solid #ccc;
  background: #fff;
}
.dl-item {
  width: 350px;
  height: 66px;
  flex: none;
  display: flex;
  align-items: center;
  padding: 0 28px 0 23px;
  border-right: 1px solid #c8c8c8;
}
.dl-icon {
  width: 26px;
  height: 26px;
  flex: none;
}
.dl-name {
  flex: 1;
  margin-left: 19px;
  font-size: 18.650px;
  color: #3c4043;
  white-space: nowrap;
}
.dl-caret {
  width: 14px;
  height: 9px;
  flex: none;
}
.show-all {
  margin-left: auto;
  width: 117px;
  height: 48px;
  border: 1px solid #dadce0;
  border-radius: 5px;
  color: #1a73e8;
  font-size: 17.500px;
  font-weight: 600;
  text-align: center;
  line-height: 44px;
}
.dl-close {
  width: 14px;
  height: 14px;
  margin: 0 20px;
  flex: none;
}

/* windows taskbar */
.taskbar {
  height: 60px;
  flex: none;
  display: flex;
  align-items: stretch;
  background: #1a1a1a;
  color: #fff;
}
.start {
  width: 72px;
  padding-left: 2px;
  display: flex;
  align-items: center;
  justify-content: center;
}
.search {
  width: 516px;
  flex: none;
  display: flex;
  align-items: center;
  padding: 0 23px 0 14px;
  background: #f2f2f2;
  color: #222;
}
.cortana {
  width: 32px;
  height: 32px;
  flex: none;
  border-radius: 50%;
  background: #fff;
  border: 4px solid #000;
  box-shadow: 0 0 0 1px #888;
}
.search-text {
  flex: 1;
  margin-left: 15px;
  font-size: 19.600px;
}
.task-apps {
  display: flex;
  margin-left: 3px;
}
.app {
  width: 72px;
  display: flex;
  align-items: center;
  justify-content: center;
  position: relative;
}
.app-view {
  padding-right: 5px;
}
.app-active {
  background: #3f3f3f;
}
.app-run::after,
.app-active::after,
.app-run-split::after {
  content: "";
  position: absolute;
  left: 6px;
  right: 6px;
  bottom: 0;
  height: 3px;
  background: #a5d8f3;
}
.app-active::after {
  left: 0;
  right: 0;
}
.wa {
  position: relative;
  display: flex;
}
.wa-badge {
  position: absolute;
  right: -6px;
  bottom: -3px;
  width: 24px;
  height: 28px;
  border-radius: 50%;
  background: #f00;
  font-size: 18px;
  font-weight: 700;
  text-align: center;
  line-height: 28px;
}
.tray {
  flex: 1;
  display: flex;
  align-items: center;
  position: relative;
}
.tray-people {
  margin-left: 36px;
  margin-right: 31px;
}
.tray-up {
  margin-right: 21px;
}
.tray-wifi {
  margin-right: 12px;
}
.tray-batt {
  margin-right: 12px;
}
.tray-vol {
  margin-right: 13px;
}
.tray-lang {
  font-size: 17px;
  margin-left: 4px;
}
.clock {
  margin-left: 14px;
  width: 92px;
  display: flex;
  flex-direction: column;
  align-items: center;
  font-size: 17.500px;
  line-height: 29px;
  white-space: nowrap;
}
.notif {
  position: relative;
  margin-left: 25px;
  display: flex;
}
.notif-count {
  position: absolute;
  right: -12px;
  bottom: -8px;
  width: 24px;
  height: 24px;
  border-radius: 50%;
  background: #222;
  border: 1px solid #888;
  font-size: 16px;
  font-weight: 700;
  text-align: center;
  line-height: 22px;
}
```
